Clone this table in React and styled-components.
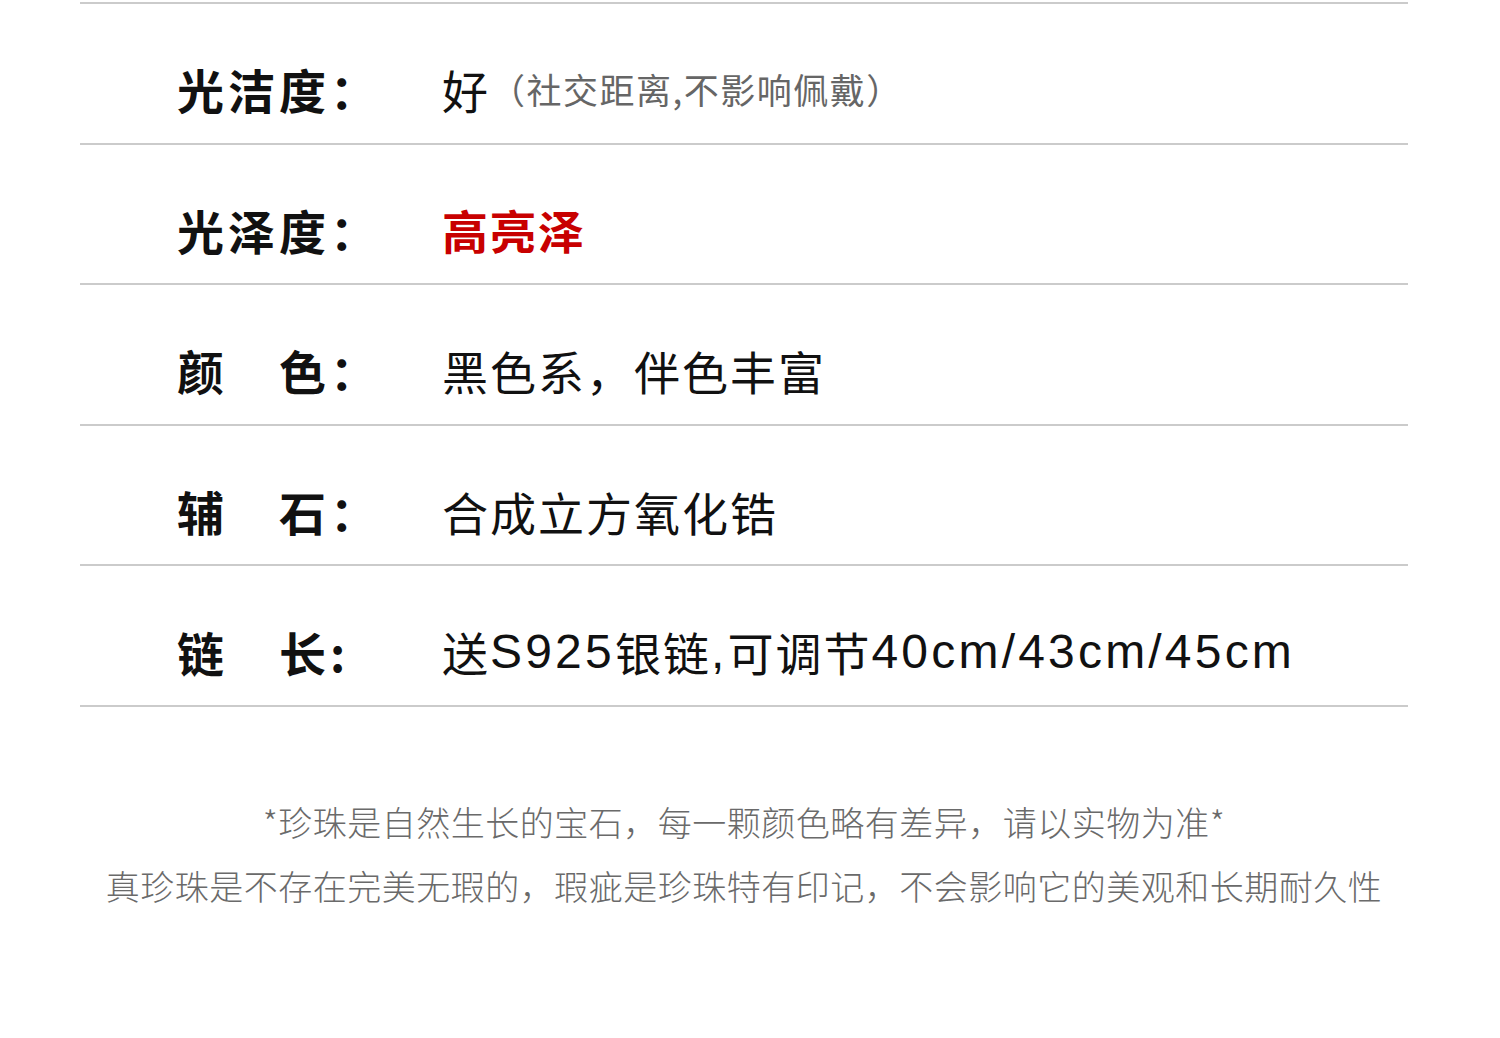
import React from "react";
import styled, { createGlobalStyle } from "styled-components";

const Global = createGlobalStyle`
  html, body { margin: 0; padding: 0; background: #ffffff; }
  body { font-family: "Liberation Sans", "Noto Sans CJK SC", sans-serif; }
`;

const Page = styled.div`
  width: 1500px;
  height: 1038px;
  background: #fff;
  padding-top: 2px;
  box-sizing: border-box;
`;

const Table = styled.div`
  margin: 0 92px 0 80px;
  border-bottom: 2px solid #cbcbcb;
`;

const Row = styled.div`
  display: flex;
  align-items: center;
  height: 140.6px;
  box-sizing: border-box;
  border-top: 2px solid #cbcbcb;
  padding: 31px 0 0 97px;
`;

const Label = styled.div`
  width: 265px;
  flex: none;
  font-family: "Noto Sans CJK SC", sans-serif;
  font-weight: 700;
  font-size: 47px;
  letter-spacing: 4px;
  color: #111;
  white-space: pre;
`;

const Value = styled.div`
  font-family: "Noto Sans CJK SC", sans-serif;
  font-size: 46px;
  letter-spacing: 2px;
  color: ${(p) => (p.$red ? "#c80000" : "#111")};
  font-weight: ${(p) => (p.$red ? 700 : 400)};
  white-space: nowrap;
  display: flex;
  align-items: center;
`;

const Latin = styled.span`
  font-family: "Liberation Sans", sans-serif;
  font-size: 48px;
  letter-spacing: 3.2px;
`;

const Note = styled.span`
  font-family: "Noto Sans CJK SC", sans-serif;
  font-size: 35px;
  letter-spacing: 1.5px;
  color: #666;
  font-weight: 400;
`;

const Footer = styled.div`
  margin: 83px 92px 0 80px;
  text-align: center;
  font-family: "Noto Sans CJK SC", sans-serif;
  font-size: 34px;
  letter-spacing: 0.5px;
  line-height: 64px;
  color: #6a6a6a;
  font-weight: 300;
`;

const rows = [
  { label: "光洁度：", value: ["好"], note: "（社交距离,不影响佩戴）" },
  { label: "光泽度：", value: ["高亮泽"], red: true },
  { label: "颜\u3000色：", value: ["黑色系，伴色丰富"] },
  { label: "辅\u3000石：", value: ["合成立方氧化锆"] },
  {
    label: "链\u3000长:",
    value: ["送", { l: "S925" }, "银链", { l: "," }, "可调节", { l: "40cm/43cm/45cm" }],
  },
];

export default function App() {
  return (
    <Page>
      <Global />
      <Table>
        {rows.map((r) => (
          <Row key={r.label}>
            <Label>{r.label}</Label>
            <Value $red={r.red}>
              {r.value.map((part, i) =>
                typeof part === "string" ? (
                  <span key={i}>{part}</span>
                ) : (
                  <Latin key={i}>{part.l}</Latin>
                )
              )}
              {r.note && <Note>{r.note}</Note>}
            </Value>
          </Row>
        ))}
      </Table>
      <Footer>
        <div>*珍珠是自然生长的宝石，每一颗颜色略有差异，请以实物为准*</div>
        <div>真珍珠是不存在完美无瑕的，瑕疵是珍珠特有印记，不会影响它的美观和长期耐久性</div>
      </Footer>
    </Page>
  );
}
